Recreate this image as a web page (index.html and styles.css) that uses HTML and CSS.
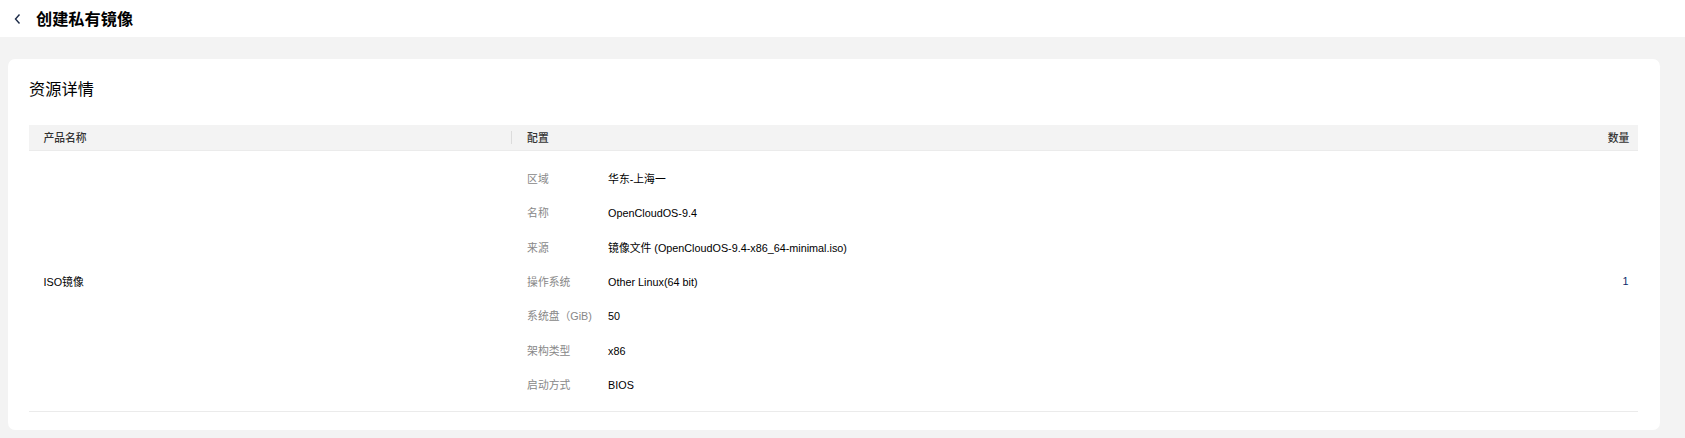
FILE: index.html
```html
<!DOCTYPE html>
<html lang="zh-CN">
<head>
<meta charset="utf-8">
<title>创建私有镜像</title>
<link rel="stylesheet" href="styles.css">
</head>
<body>
<header class="topbar">
  <span class="back">
    <svg width="10" height="12" viewBox="0 0 10 12"><path d="M6.5 1.5 L2.5 6 L6.5 10.5" fill="none" stroke="#1b2a47" stroke-width="1.4"/></svg>
  </span>
  <h1 class="page-title">创建私有镜像</h1>
</header>
<main class="main">
  <section class="card">
    <h2 class="card-title">资源详情</h2>
    <div class="table">
      <div class="thead">
        <div class="th th-name">产品名称</div>
        <div class="th th-conf"><span class="sep"></span>配置</div>
        <div class="th th-qty">数量</div>
      </div>
      <div class="trow">
        <div class="td td-name">ISO镜像</div>
        <div class="td td-conf">
          <dl class="specs">
            <dt>区域</dt><dd>华东-上海一</dd>
            <dt>名称</dt><dd>OpenCloudOS-9.4</dd>
            <dt>来源</dt><dd>镜像文件 (OpenCloudOS-9.4-x86_64-minimal.iso)</dd>
            <dt>操作系统</dt><dd>Other Linux(64 bit)</dd>
            <dt>系统盘（GiB)</dt><dd>50</dd>
            <dt>架构类型</dt><dd>x86</dd>
            <dt>启动方式</dt><dd>BIOS</dd>
          </dl>
        </div>
        <div class="td td-qty">1</div>
      </div>
    </div>
  </section>
</main>
</body>
</html>
```

FILE: styles.css
```css
* { box-sizing: border-box; }
html, body { margin: 0; padding: 0; }
body {
  font-family: "Liberation Sans", "Noto Sans CJK SC", sans-serif;
  background: #f3f3f3;
  color: #000;
  font-size: 10.8px;
}
.topbar {
  height: 37px;
  background: #fff;
  display: flex;
  align-items: center;
  padding-left: 13px;
}
.back {
  display: flex;
  width: 10px;
  height: 12px;
  margin-right: 13px;
}
.page-title {
  margin: 0;
  font-size: 16.2px;
  font-weight: 700;
  line-height: 18px;
  color: #000;
}
.main {
  padding: 22px 25px 7px 7.5px;
}
.card {
  background: #fff;
  border-radius: 7.2px;
  padding: 21.6px 21.6px 18px;
}
.card-title {
  margin: 0 0 28.4px;
  font-size: 16.2px;
  font-weight: 400;
  line-height: 16px;
  color: #000;
}
.thead, .trow {
  display: grid;
  grid-template-columns: 482px 1fr 160px;
}
.thead {
  height: 26.2px;
  background: #f3f3f3;
  border-bottom: 1px solid #ebebeb;
  align-items: center;
  font-weight: 500;
  color: #333;
}
.th { line-height: 14px; }
.th-name { padding-left: 14.4px; }
.th-conf { display: flex; align-items: center; }
.sep {
  width: 1px;
  height: 13px;
  background: #dcdcdc;
  margin-right: 15px;
}
.th-qty { text-align: right; padding-right: 9px; }
.trow {
  border-bottom: 1px solid #ebebeb;
  align-items: center;
}
.td-name { padding-left: 14.4px; }
.td-conf { padding: 19px 0 17.5px 16px; }
.td-qty { text-align: right; padding-right: 10px; color: #0b2a6b; font-weight: 500; }
.specs {
  margin: 0;
  display: grid;
  grid-template-columns: 81px 1fr;
  row-gap: 16.3px;
  line-height: 18px;
}
.specs dt { color: #888; }
.specs dd { margin: 0; color: #000; }
```
